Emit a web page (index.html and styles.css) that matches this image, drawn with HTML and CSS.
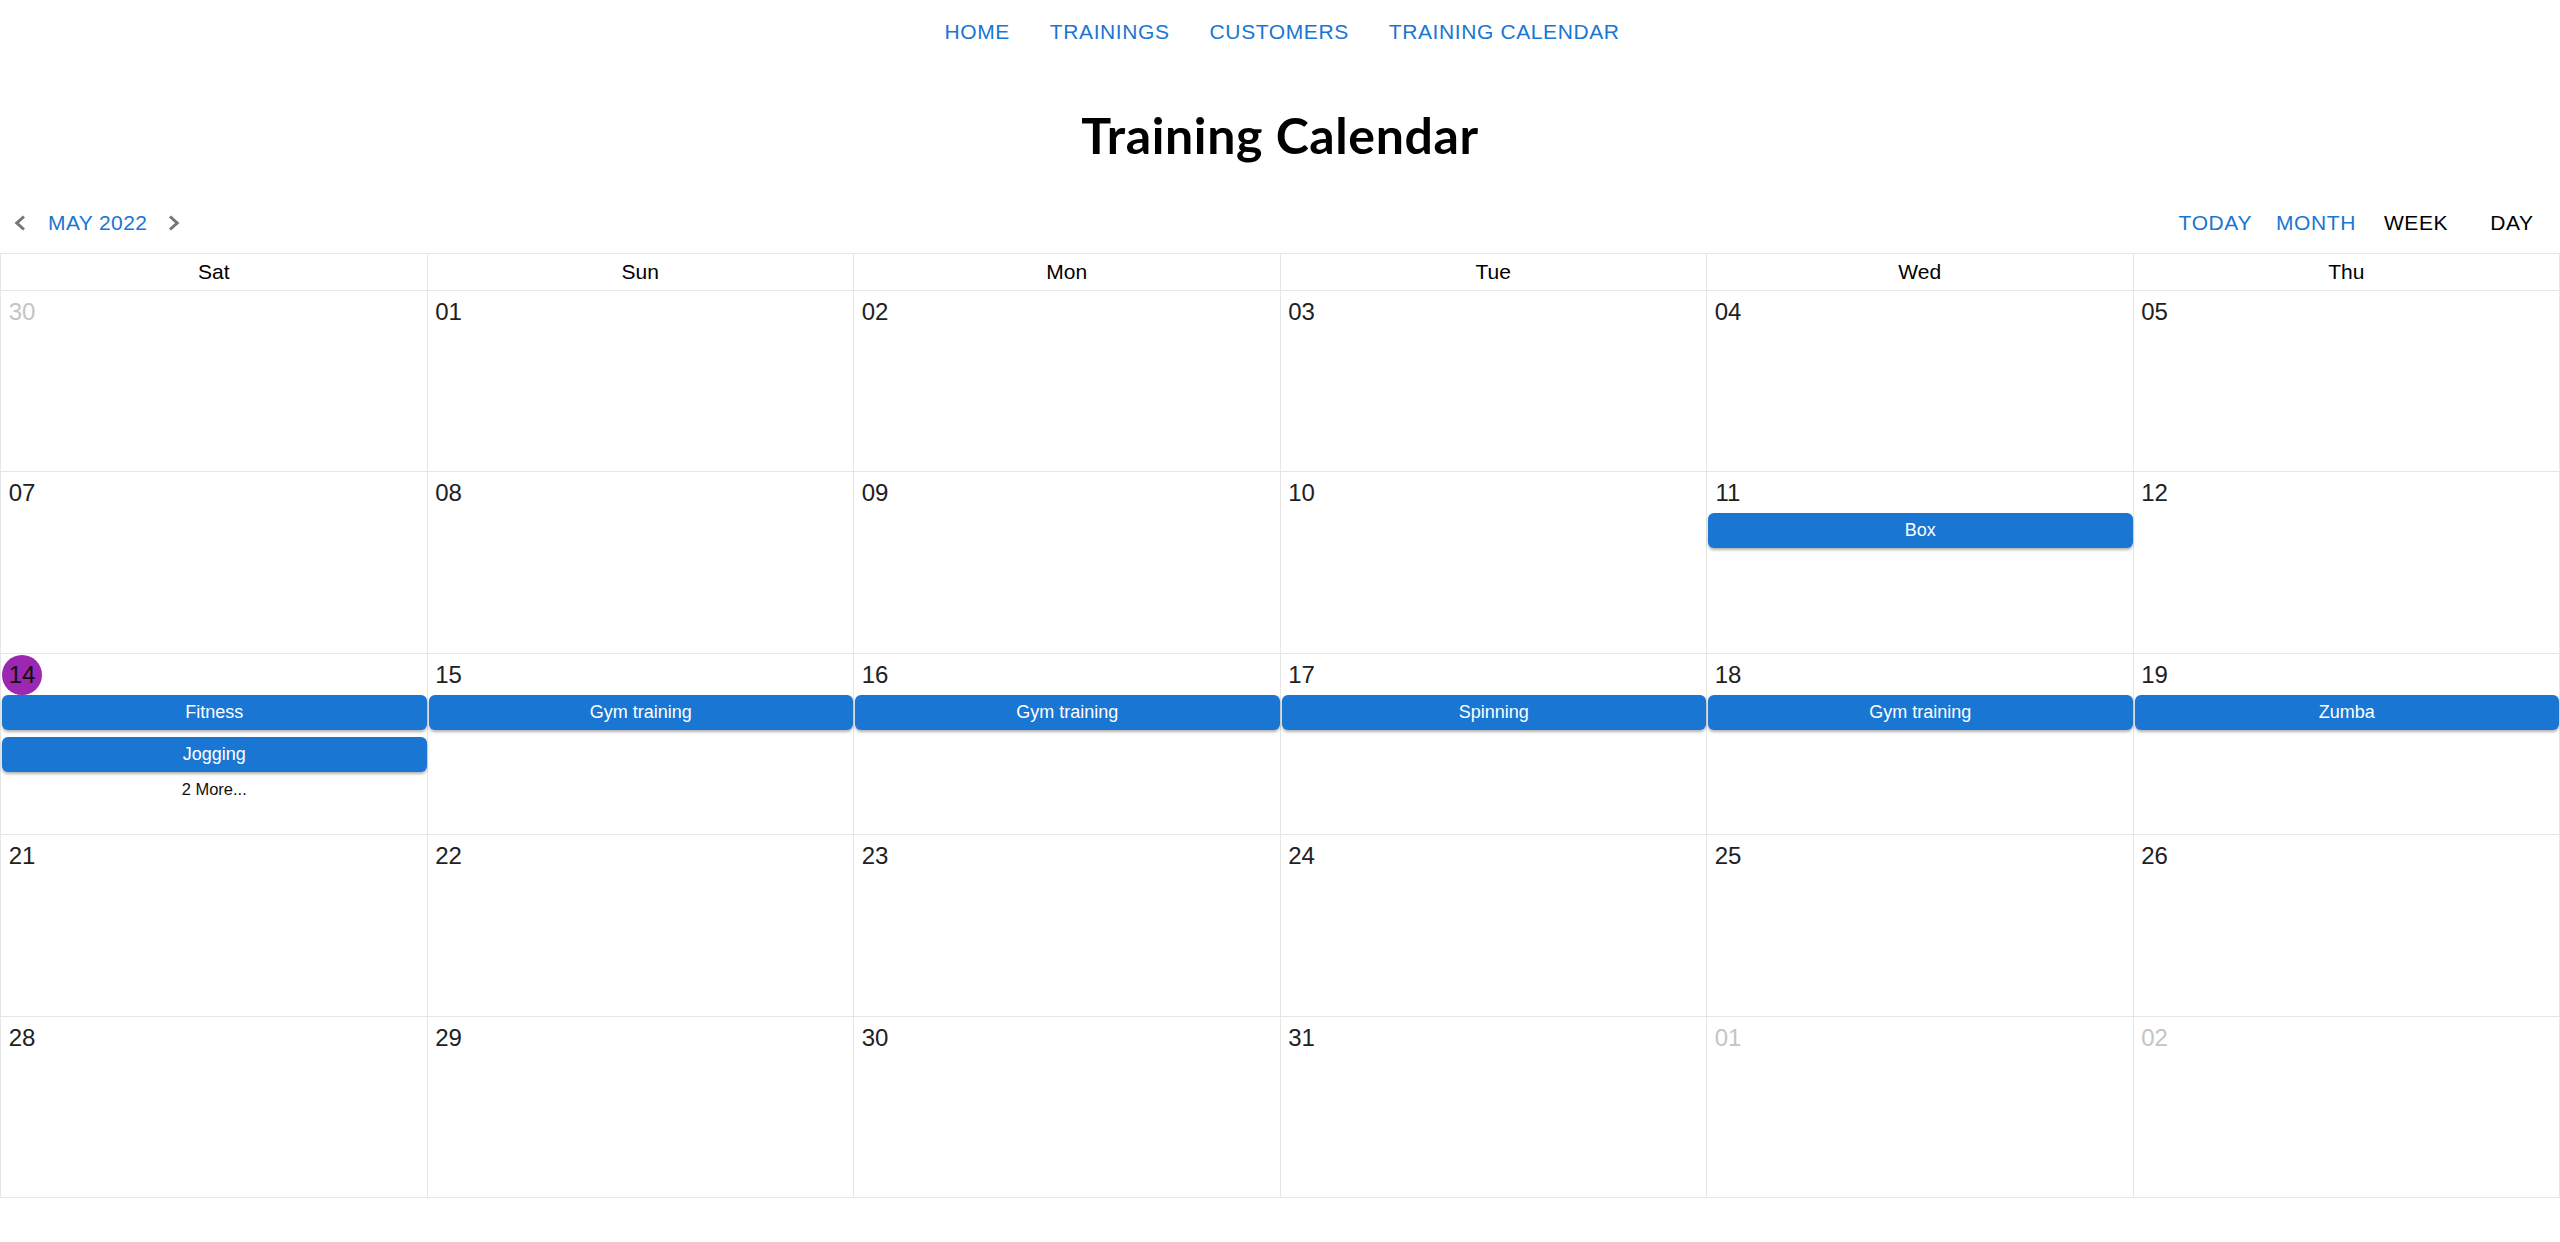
FILE: index.html
```html
<!DOCTYPE html>
<html lang="en">
<head>
<meta charset="utf-8">
<title>Training Calendar</title>
<link rel="stylesheet" href="styles.css">
</head>
<body>
<nav class="topnav">
  <a class="navbtn">HOME</a>
  <a class="navbtn">TRAININGS</a>
  <a class="navbtn">CUSTOMERS</a>
  <a class="navbtn">TRAINING CALENDAR</a>
</nav>
<h1 class="title">Training Calendar</h1>
<div class="toolbar">
  <div class="tb-left">
    <button class="icon-btn" aria-label="previous"><svg width="13" height="16" viewBox="0 0 13 16"><path d="M11 1.5 L3.8 8 L11 14.5" fill="none" stroke="#757575" stroke-width="3"/></svg></button>
    <span class="tb-label">MAY 2022</span>
    <button class="icon-btn" aria-label="next"><svg width="13" height="16" viewBox="0 0 13 16"><path d="M2 1.5 L9.2 8 L2 14.5" fill="none" stroke="#757575" stroke-width="3"/></svg></button>
  </div>
  <div class="tb-right">
    <button class="view-btn blue">TODAY</button>
    <button class="view-btn blue">MONTH</button>
    <button class="view-btn">WEEK</button>
    <button class="view-btn">DAY</button>
  </div>
</div>
<div class="calendar">
  <div class="head">Sat</div>
  <div class="head">Sun</div>
  <div class="head">Mon</div>
  <div class="head">Tue</div>
  <div class="head">Wed</div>
  <div class="head">Thu</div>

  <div class="cell"><div class="date other">30</div></div>
  <div class="cell"><div class="date">01</div></div>
  <div class="cell"><div class="date">02</div></div>
  <div class="cell"><div class="date">03</div></div>
  <div class="cell"><div class="date">04</div></div>
  <div class="cell"><div class="date">05</div></div>

  <div class="cell"><div class="date">07</div></div>
  <div class="cell"><div class="date">08</div></div>
  <div class="cell"><div class="date">09</div></div>
  <div class="cell"><div class="date">10</div></div>
  <div class="cell"><div class="date">11</div><div class="event">Box</div></div>
  <div class="cell"><div class="date">12</div></div>

  <div class="cell"><div class="date today">14</div><div class="event">Fitness</div><div class="event">Jogging</div><div class="more">2 More...</div></div>
  <div class="cell"><div class="date">15</div><div class="event">Gym training</div></div>
  <div class="cell"><div class="date">16</div><div class="event">Gym training</div></div>
  <div class="cell"><div class="date">17</div><div class="event">Spinning</div></div>
  <div class="cell"><div class="date">18</div><div class="event">Gym training</div></div>
  <div class="cell"><div class="date">19</div><div class="event">Zumba</div></div>

  <div class="cell"><div class="date">21</div></div>
  <div class="cell"><div class="date">22</div></div>
  <div class="cell"><div class="date">23</div></div>
  <div class="cell"><div class="date">24</div></div>
  <div class="cell"><div class="date">25</div></div>
  <div class="cell"><div class="date">26</div></div>

  <div class="cell"><div class="date">28</div></div>
  <div class="cell"><div class="date">29</div></div>
  <div class="cell"><div class="date">30</div></div>
  <div class="cell"><div class="date">31</div></div>
  <div class="cell"><div class="date other">01</div></div>
  <div class="cell"><div class="date other">02</div></div>
</div>
</body>
</html>
```
FILE: styles.css
```css
* { box-sizing: border-box; }
html, body { margin: 0; padding: 0; background: #fff; }
body {
  font-family: "Liberation Sans", Arial, sans-serif;
  color: #212121;
}
.topnav {
  display: flex;
  justify-content: center;
  gap: 16px;
  padding-top: 5px;
  padding-left: 4px;
}
.navbtn {
  font-size: 21px;
  line-height: 36.75px;
  padding: 9px 12px;
  letter-spacing: 0.6px;
  color: #1976d2;
  text-transform: uppercase;
}
.title {
  font-family: Lato, "Open Sans", sans-serif;
  font-weight: 700;
  font-size: 50px;
  letter-spacing: 0.6px;
  line-height: 58px;
  text-align: center;
  color: #000;
  margin: 46px 0 32px;
}
.toolbar {
  display: flex;
  justify-content: space-between;
  align-items: center;
  padding-right: 0;
  margin-bottom: 2px;
}
.tb-left {
  display: flex;
  align-items: center;
  padding-left: 13px;
}
.icon-btn {
  border: 0;
  background: none;
  padding: 0;
  margin: 0;
  width: 13px;
  height: 16px;
  display: flex;
  align-items: center;
  justify-content: center;
}
.icon-btn svg { display: block; }
.tb-label {
  font-size: 21px;
  line-height: 36.75px;
  letter-spacing: 0.4px;
  color: #1976d2;
  margin: 0 21px 0 22px;
  padding: 9px 0;
}
.tb-right { display: flex; }
.view-btn {
  font-family: "Liberation Sans", Arial, sans-serif;
  font-size: 21px;
  line-height: 36.75px;
  letter-spacing: 0.6px;
  min-width: 96px;
  padding: 9px 12px;
  border: 0;
  background: none;
  color: #000;
  text-align: center;
}
.view-btn.blue { color: #1976d2; }
.calendar {
  display: grid;
  grid-template-columns: repeat(6, 1fr);
  grid-template-rows: 37px repeat(5, 181.6px);
  border-top: 1px solid #e6e6e6;
  border-left: 1px solid #e6e6e6;
}
.head {
  border-right: 1px solid #e6e6e6;
  border-bottom: 1px solid #e6e6e6;
  font-size: 21px;
  line-height: 36px;
  text-align: center;
  color: #000;
}
.cell {
  border-right: 1px solid #e6e6e6;
  border-bottom: 1px solid #e6e6e6;
  padding: 1px 0 1px 1px;
  min-width: 0;
}
.date {
  width: 40px;
  height: 40px;
  display: flex;
  align-items: center;
  justify-content: center;
  font-size: 24px;
  line-height: 1;
  color: #212121;
}
.date.other { color: #c4c4c4; }
.date.today {
  background: #9c27b0;
  border-radius: 50%;
  color: #111;
}
.event {
  height: 35px;
  margin-bottom: 7px;
  background: #1976d2;
  color: #fff;
  border-radius: 6px;
  font-size: 18px;
  display: flex;
  align-items: center;
  justify-content: center;
  box-shadow: 0 2px 3px rgba(0, 0, 0, 0.3);
}
.more {
  font-size: 16.5px;
  text-align: center;
  color: #111;
  margin-top: 8px;
}
```
